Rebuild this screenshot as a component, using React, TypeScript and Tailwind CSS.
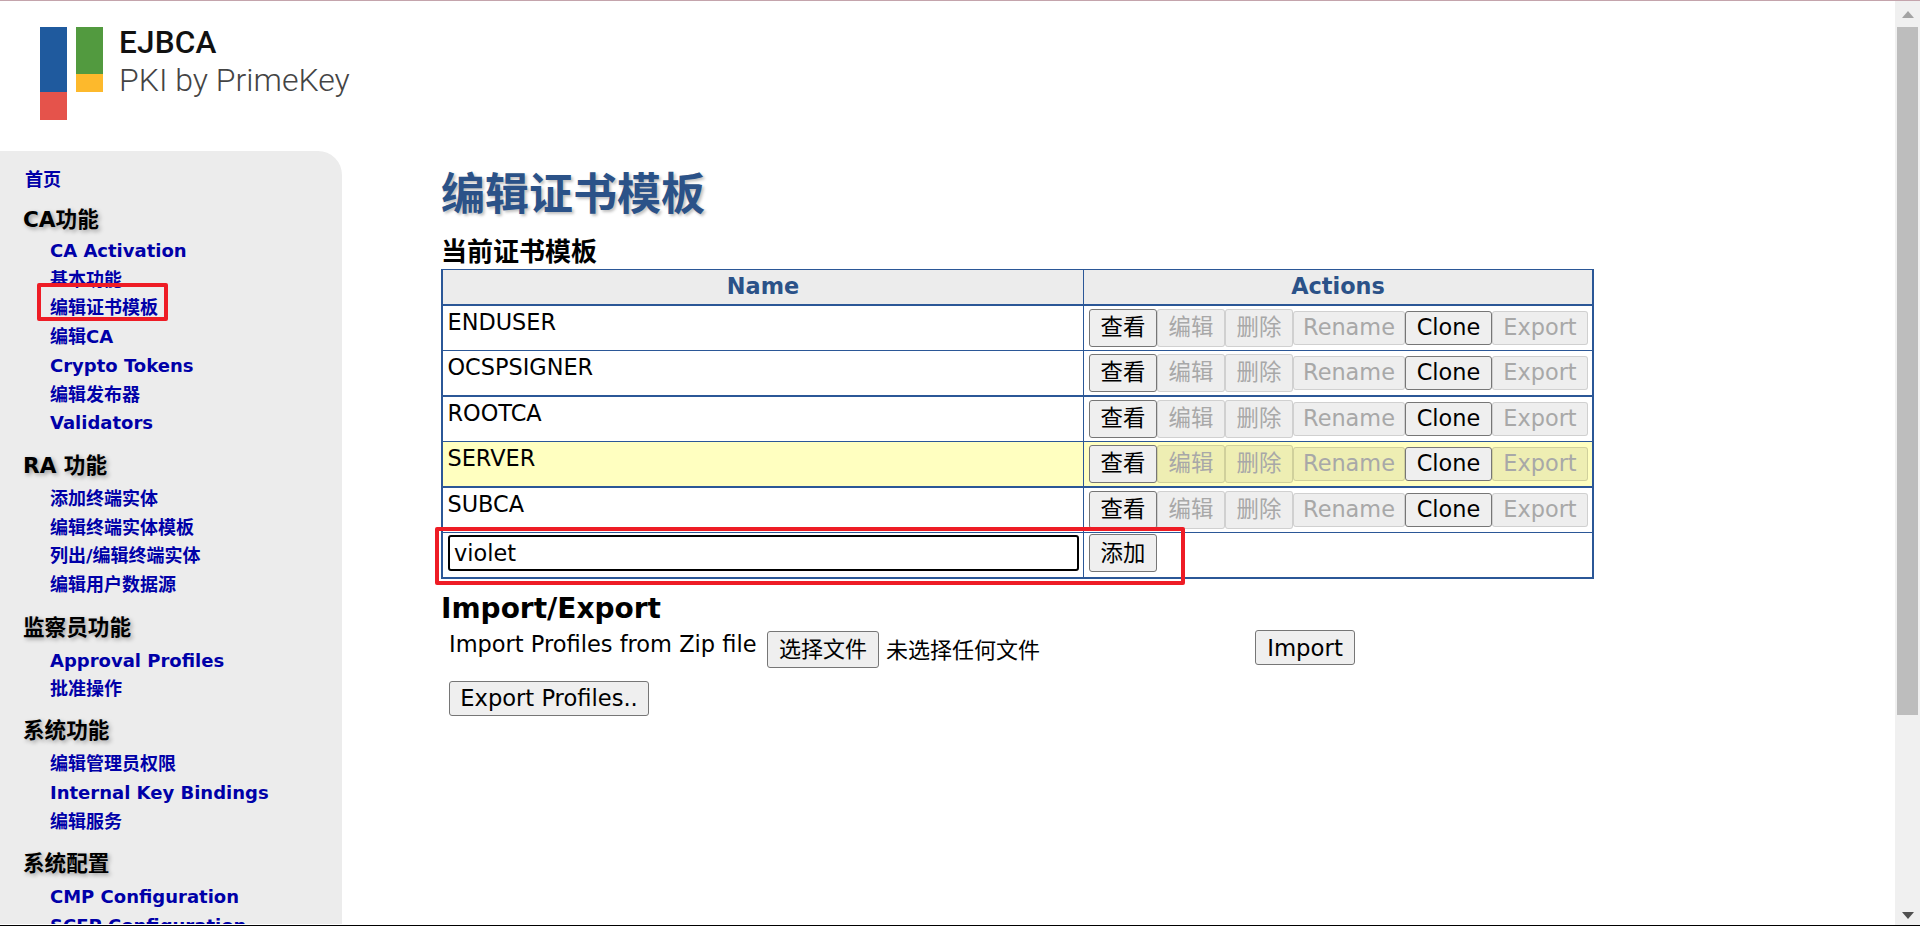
import React from "react";

const navGroups: { title: string; links: string[]; gap: string; inner: string }[] = [
  { title: "CA功能", gap: "mt-[11px]", inner: "mt-[2px]", links: ["CA Activation", "基本功能", "编辑证书模板", "编辑CA", "Crypto Tokens", "编辑发布器", "Validators"] },
  { title: "RA 功能", gap: "mt-[13px]", inner: "mt-[4px]", links: ["添加终端实体", "编辑终端实体模板", "列出/编辑终端实体", "编辑用户数据源"] },
  { title: "监察员功能", gap: "mt-[13px]", inner: "mt-[4px]", links: ["Approval Profiles", "批准操作"] },
  { title: "系统功能", gap: "mt-[12px]", inner: "mt-[4px]", links: ["编辑管理员权限", "Internal Key Bindings", "编辑服务"] },
  { title: "系统配置", gap: "mt-[13px]", inner: "mt-[4px]", links: ["CMP Configuration", "SCEP Configuration"] },
];

const rows = [
  { name: "ENDUSER", thick: false },
  { name: "OCSPSIGNER", thick: true },
  { name: "ROOTCA", thick: false },
  { name: "SERVER", thick: true, hi: true },
  { name: "SUBCA", thick: false },
];

function Btn({ children, disabled, size }: { children: React.ReactNode; disabled?: boolean; size: string }) {
  return (
    <button
      disabled={disabled}
      className={
        size +
        " shrink-0 rounded-[3px] border px-0 text-[22.4px] leading-none whitespace-nowrap " +
        (disabled
          ? "border-black/[0.13] bg-black/[0.065] text-[#a8a8a8]"
          : "border-[#767676] bg-[#efefef] text-black")
      }
    >
      {children}
    </button>
  );
}

function Logo() {
  return (
    <div className="flex h-[150px] items-start pl-[40px] pt-[26px]">
      <svg width="64" height="93" viewBox="0 0 64 93" className="shrink-0">
        <rect x="0" y="0" width="27" height="65" fill="#1f5a9e" />
        <rect x="0" y="65" width="27" height="28" fill="#e5534b" />
        <rect x="36" y="0" width="27" height="47" fill="#529a3f" />
        <rect x="36" y="47" width="27" height="18" fill="#fdb92c" />
      </svg>
      <div className="mt-[-2px] ml-[15px] font-['Roboto',sans-serif]">
        <div className="text-[31.5px] leading-[36px] font-medium tracking-[0.2px] text-[#111]">EJBCA</div>
        <div className="text-[32px] leading-[39px] font-light text-[#444]">PKI by PrimeKey</div>
      </div>
    </div>
  );
}

function Sidebar() {
  return (
    <aside className="h-[773px] w-[342px] shrink-0 overflow-hidden rounded-tr-[24px] bg-[#ececec] pt-[15px]">
      <a className="ml-[25px] block text-[18px] leading-[28px] font-bold text-[#0000a8]">首页</a>
      {navGroups.map((g) => (
        <div key={g.title} className={g.gap}>
          <div className="ml-[23px] text-[21.6px] leading-[30px] font-bold text-black [text-shadow:2px_2px_4px_rgba(0,0,0,0.35)]">
            {g.title}
          </div>
          <ul className={g.inner + " ml-[50px]"}>
            {g.links.map((l) => (
              <li key={l} className="text-[18px] leading-[28.7px] font-bold whitespace-nowrap text-[#0000a8]">
                {l}
              </li>
            ))}
          </ul>
        </div>
      ))}
    </aside>
  );
}

function TemplateTable() {
  return (
    <table className="w-[1153px] table-fixed border-separate border-spacing-0 border-t border-r-2 border-l-2 border-[#2b5797] text-[22.4px] text-black">
      <colgroup>
        <col className="w-[641px]" />
        <col />
      </colgroup>
      <thead>
        <tr className="h-[35px] bg-[#ececec] text-[#2b5288]">
          <th className="border-r border-b-2 border-[#2b5797] p-0 text-center font-bold">Name</th>
          <th className="border-b-2 border-[#2b5797] p-0 text-center font-bold">Actions</th>
        </tr>
      </thead>
      <tbody>
        {rows.map((r) => (
          <tr key={r.name} className={(r.thick ? "h-[46px] " : "h-[45px] ") + (r.hi ? "bg-[#ffffc0]" : "bg-white")}>
            <td className={"border-r border-[#2b5797] px-[4.5px] pt-[1px] align-top leading-[31px] " + (r.thick ? "border-b-2" : "border-b")}>
              {r.name}
            </td>
            <td className={"border-[#2b5797] py-0 pl-[5px] " + (r.thick ? "border-b-2" : "border-b")}>
              <div className="flex items-center">
                <Btn size="h-[38px] w-[68px]">查看</Btn>
                <Btn size="h-[38px] w-[68px]" disabled>编辑</Btn>
                <Btn size="h-[38px] w-[68px]" disabled>删除</Btn>
                <Btn size="h-[34px] w-[112px]" disabled>Rename</Btn>
                <Btn size="h-[34px] w-[87px]">Clone</Btn>
                <Btn size="h-[34px] w-[96px]" disabled>Export</Btn>
              </div>
            </td>
          </tr>
        ))}
        <tr className="h-[46px]">
          <td className="border-r border-b-2 border-[#2b5797] px-[5px] pt-0 pb-[3px]">
            <input
              readOnly
              value="violet"
              className="block h-[36px] w-[631px] rounded-[3px] border-2 border-black bg-white px-[4px] text-[22.4px] text-black outline-none"
            />
          </td>
          <td className="border-b-2 border-[#2b5797] pt-0 pb-[3px] pl-[5px]">
            <Btn size="h-[38px] w-[68px]">添加</Btn>
          </td>
        </tr>
      </tbody>
    </table>
  );
}

function Main() {
  return (
    <main className="relative min-w-0 flex-1 pl-[99px]">
      <h1 className="mt-[12px] text-[44px] leading-[64px] font-bold text-[#2b5288] [text-shadow:2px_2px_3px_rgba(0,0,0,0.25)]">
        编辑证书模板
      </h1>
      <h3 className="mt-[9px] text-[26px] leading-[33px] font-bold text-black">当前证书模板</h3>
      <TemplateTable />
      <h3 className="mt-[13px] text-[28px] leading-[34px] font-bold text-black">Import/Export</h3>
      <div className="flex items-start pl-[8px] text-[22.5px] text-black">
        <span className="mt-[2px] w-[318px] shrink-0 leading-[32px]">Import Profiles from Zip file</span>
        <button className="mt-[5px] h-[37px] w-[112px] shrink-0 rounded-[3px] border border-[#767676] bg-[#efefef] text-[22px]">
          选择文件
        </button>
        <span className="mt-[9px] ml-[7px] w-[369px] shrink-0 text-[22px] leading-[32px]">未选择任何文件</span>
        <button className="mt-[4px] h-[35px] w-[100px] shrink-0 rounded-[3px] border border-[#767676] bg-[#efefef] text-[22.8px]">
          Import
        </button>
      </div>
      <div className="mt-[13px] pl-[8px]">
        <button className="h-[35px] w-[200px] rounded-[3px] border border-[#767676] bg-[#efefef] text-[22.6px] text-black">
          Export Profiles..
        </button>
      </div>
    </main>
  );
}

function Scrollbar() {
  return (
    <div className="flex w-[25px] shrink-0 flex-col items-center bg-[#f0f0f0]">
      <svg width="12" height="7" viewBox="0 0 12 7" className="mt-[10px] shrink-0">
        <path d="M6 0 L12 7 L0 7 Z" fill="#a3a3a3" />
      </svg>
      <div className="mt-[9px] h-[688px] w-[21px] shrink-0 bg-[#bdbdbd]" />
      <svg width="12" height="7" viewBox="0 0 12 7" className="mt-[197px] shrink-0">
        <path d="M0 0 L12 0 L6 7 Z" fill="#505050" />
      </svg>
    </div>
  );
}

export default function App() {
  return (
    <div className="relative flex h-[926px] w-[1920px] flex-col overflow-hidden bg-white font-['DejaVu_Sans','Noto_Sans_CJK_SC',sans-serif]">
      <div className="h-px w-full shrink-0 bg-[#c4a4ac]" />
      <div className="flex min-h-0 flex-1">
        <div className="flex min-w-0 flex-1">
          <div className="flex w-[342px] shrink-0 flex-col">
            <div className="w-[420px]">
              <Logo />
            </div>
            <Sidebar />
          </div>
          <div className="flex min-w-0 flex-1 pt-[150px]">
            <Main />
          </div>
        </div>
        <Scrollbar />
      </div>
      <div className="h-px w-full shrink-0 bg-black" />
      <div className="absolute top-[283px] left-[37px] h-[38px] w-[131px] rounded-[2px] border-4 border-[#ee1c25]" />
      <div className="absolute top-[527px] left-[435px] h-[58px] w-[750px] rounded-[2px] border-4 border-[#ee1c25]" />
    </div>
  );
}
